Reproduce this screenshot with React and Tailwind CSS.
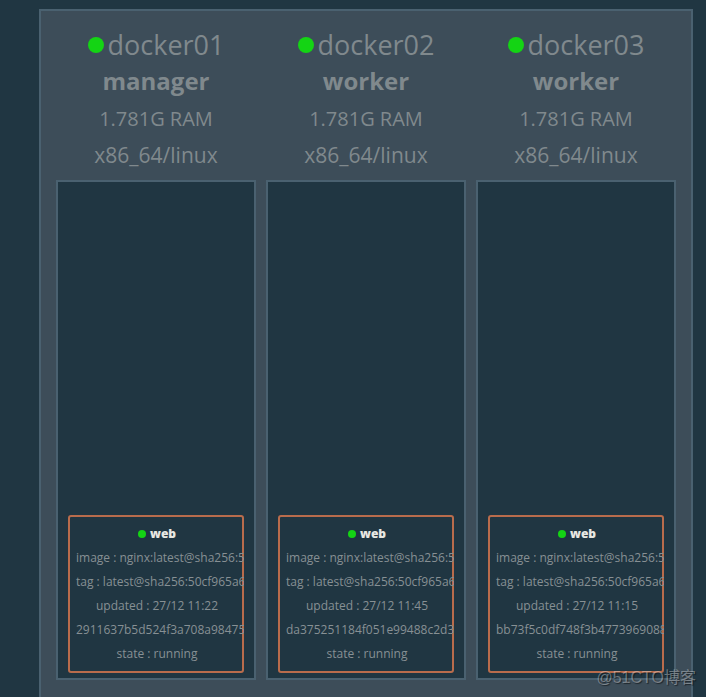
import React from 'react';

const nodes = [
  {
    name: 'docker01',
    role: 'manager',
    ram: '1.781G RAM',
    platform: 'x86_64/linux',
    tasks: [{ service: 'web', updated: '27/12 11:22', id: '2911637b5d524f3a708a98475' }],
  },
  {
    name: 'docker02',
    role: 'worker',
    ram: '1.781G RAM',
    platform: 'x86_64/linux',
    tasks: [{ service: 'web', updated: '27/12 11:45', id: 'da375251184f051e99488c2d3' }],
  },
  {
    name: 'docker03',
    role: 'worker',
    ram: '1.781G RAM',
    platform: 'x86_64/linux',
    tasks: [{ service: 'web', updated: '27/12 11:15', id: 'bb73f5c0df748f3b4773969088' }],
  },
];

const TaskCard = ({ task }) => (
  // clip on the wrapper so long values run over the card border
  <li className="overflow-hidden">
    <div className="border-2 border-[#b96c4c] rounded-[3px] py-[5px] pl-[6px] pr-1 text-xs leading-6 text-center whitespace-nowrap text-[#879094]">
      <h3 className="flex items-center justify-center gap-1 font-extrabold text-[#e8e8e2]">
        <span className="w-2 h-2 rounded-full bg-[#14d414]"></span>
        {task.service}
      </h3>
      <p>image : nginx:latest@sha256:5</p>
      <p>tag : latest@sha256:50cf965a6</p>
      <p>updated : {task.updated}</p>
      <p>{task.id}</p>
      <p>state : running</p>
    </div>
  </li>
);

const NodeColumn = ({ node }) => (
  <section className="flex-1 min-w-0">
    <header className="text-center text-[#80898d]">
      <h2 className="flex items-center justify-center gap-1 text-[27px] leading-[34px]">
        <span className="w-4 h-4 rounded-full bg-[#14d414]"></span>
        {node.name}
      </h2>
      <p className="text-2xl leading-[38px] font-bold">{node.role}</p>
      <p className="text-xl leading-[38px]">{node.ram}</p>
      <p className="text-[21px] leading-[34px]">{node.platform}</p>
    </header>
    <ul className="mt-2 min-h-[500px] flex flex-col justify-end border-2 border-[#4a6170] bg-[#203642] px-[10px] py-[5px]">
      {node.tasks.map(task => (
        <TaskCard key={task.id} task={task} />
      ))}
    </ul>
  </section>
);

const App = () => {
  return (
    <div className="relative min-h-screen flex bg-[#203642] pt-[9px] pl-[39px] pr-[13px] font-['Open_Sans',sans-serif]">
      <main className="flex-1 min-w-0 flex gap-[10px] border-2 border-b-0 border-[#4a6170] bg-[#3d4d59] px-[15px] pt-[17px] pb-[15px]">
        {nodes.map(node => (
          <NodeColumn key={node.name} node={node} />
        ))}
      </main>

      {/* Watermark */}
      <span className="absolute right-[10px] bottom-[7px] text-base leading-6 text-white/35 font-['Liberation_Sans','Noto_Sans_CJK_SC',sans-serif] [text-shadow:1px_1px_1px_rgba(0,0,0,0.5)]">
        @51CTO博客
      </span>
    </div>
  );
};

export default App;
